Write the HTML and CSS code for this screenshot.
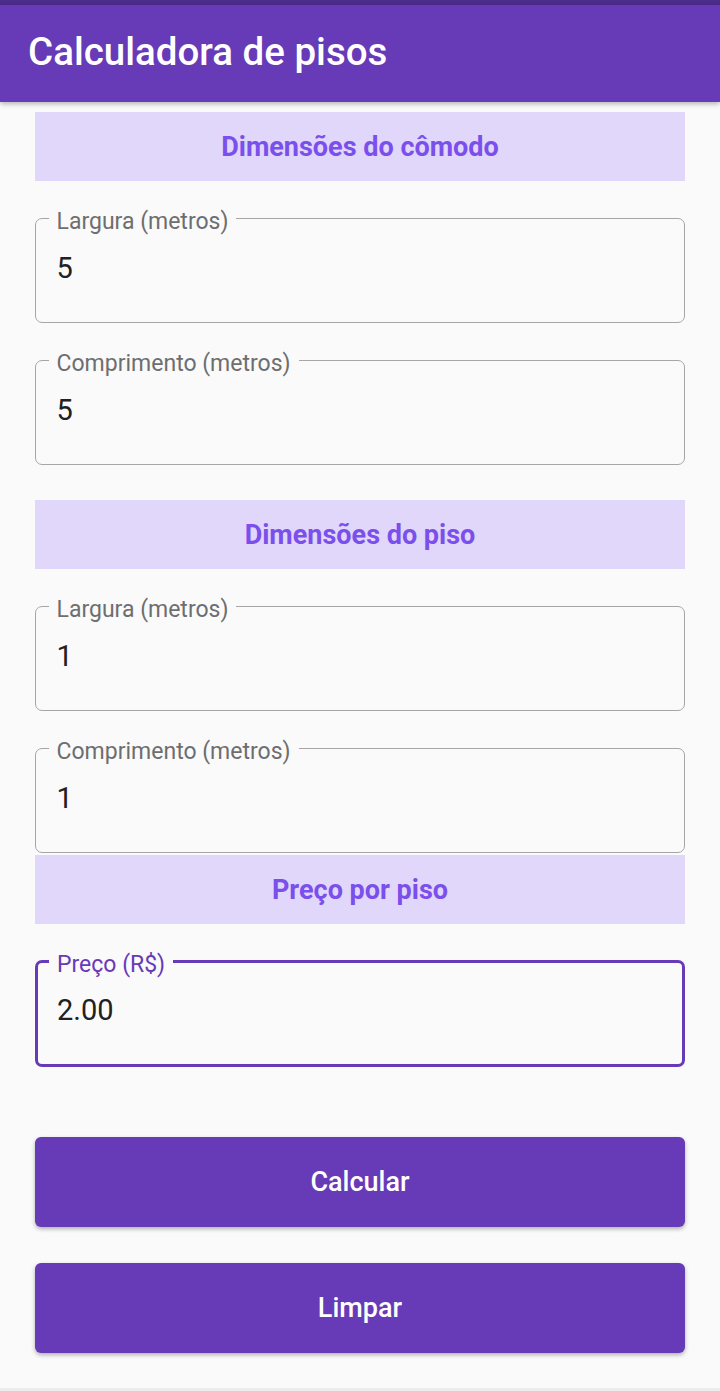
FILE: index.html
```html
<!DOCTYPE html>
<html lang="pt-BR">
<head>
<meta charset="utf-8">
<title>Calculadora de pisos</title>
<link rel="stylesheet" href="styles.css">
</head>
<body>
<div class="status"></div>
<header class="appbar"><h1 class="title">Calculadora de pisos</h1></header>
<main class="content">
  <div class="section first">Dimensões do cômodo</div>
  <fieldset class="field"><legend class="label">Largura (metros)</legend><div class="value">5</div></fieldset>
  <fieldset class="field"><legend class="label">Comprimento (metros)</legend><div class="value">5</div></fieldset>
  <div class="section second">Dimensões do piso</div>
  <fieldset class="field"><legend class="label">Largura (metros)</legend><div class="value">1</div></fieldset>
  <fieldset class="field"><legend class="label">Comprimento (metros)</legend><div class="value">1</div></fieldset>
  <div class="section third">Preço por piso</div>
  <fieldset class="field focused"><legend class="label">Preço (R$)</legend><div class="value">2.00</div></fieldset>
  <button class="btn calc">Calcular</button>
  <button class="btn clear">Limpar</button>
</main>
<div class="navbar"></div>
</body>
</html>
```
FILE: styles.css
```css
* { box-sizing: border-box; }
html, body { margin: 0; padding: 0; }
body {
  width: 720px;
  height: 1391px;
  background: #fafafa;
  font-family: Roboto, "Noto Sans", sans-serif;
  display: flex;
  flex-direction: column;
  overflow: hidden;
}
.status { height: 5px; background: #4c2c8c; }
.appbar {
  height: 97px;
  background: #673ab7;
  display: flex;
  align-items: center;
  padding-left: 28px;
  box-shadow: 0 2px 5px rgba(0,0,0,0.28);
  position: relative;
  z-index: 1;
}
.title {
  margin: 0 0 4px 0;
  color: #fff;
  font-size: 38.5px;
  font-weight: 500;
}
.content {
  flex: 1;
  padding: 0 35px;
  display: flex;
  flex-direction: column;
}
.section {
  height: 69px;
  background: #e0d7fa;
  color: #7b4fec;
  font-size: 27px;
  font-weight: 700;
  display: flex;
  align-items: center;
  justify-content: center;
}
.section.first { margin-top: 10px; }
.section.second { margin-top: 35px; }
.section.third { margin-top: 2px; }
.field {
  margin: 21px 0 0 0;
  border: 1.5px solid #a6a6a6;
  border-radius: 7px;
  padding: 0 12px 36px 12.5px;
  min-width: 0;
}
.label {
  font-size: 23px;
  line-height: 24px;
  color: #6e6e6e;
  padding: 8px 8px 0 8px;
}
.value {
  margin-top: 16px;
  font-size: 29px;
  line-height: 36px;
  color: #212121;
  padding-left: 8px;
}
.field.focused {
  border: 3px solid #673ab7;
  padding: 0 12px 36px 11px;
}
.field.focused .label { color: #673ab7; }
.field.focused .value { margin-top: 15px; }
.btn {
  height: 90px;
  border: none;
  border-radius: 6px;
  background: #673ab7;
  color: #fff;
  font-family: Roboto, "Noto Sans", sans-serif;
  font-size: 27px;
  font-weight: 500;
  box-shadow: 0 2px 4px rgba(0,0,0,0.3);
  width: 100%;
}
.btn.calc { margin-top: 70px; }
.btn.clear { margin-top: 36px; }
.navbar { height: 3px; background: #ececec; }
```
